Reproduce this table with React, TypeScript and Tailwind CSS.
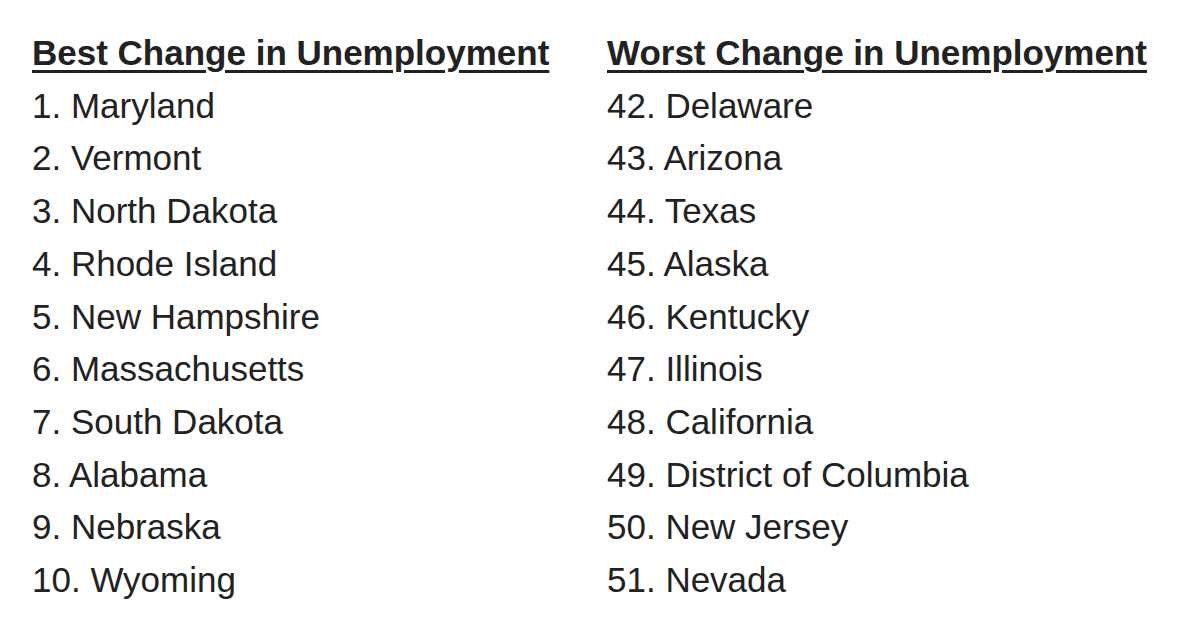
const best = [
  '1. Maryland',
  '2. Vermont',
  '3. North Dakota',
  '4. Rhode Island',
  '5. New Hampshire',
  '6. Massachusetts',
  '7. South Dakota',
  '8. Alabama',
  '9. Nebraska',
  '10. Wyoming',
]

const worst = [
  '42. Delaware',
  '43. Arizona',
  '44. Texas',
  '45. Alaska',
  '46. Kentucky',
  '47. Illinois',
  '48. California',
  '49. District of Columbia',
  '50. New Jersey',
  '51. Nevada',
]

const Column = ({ title, items }: { title: string; items: string[] }) => (
  <div className="flex flex-col">
    <h2 className="font-bold underline decoration-[3px] underline-offset-[5px]">{title}</h2>
    <ul>
      {items.map((item) => (
        <li key={item}>{item}</li>
      ))}
    </ul>
  </div>
)

export default function App() {
  return (
    <div className="min-h-[626px] w-[1182px] bg-white text-[#222222] text-[35px] leading-[52.7px] font-['Liberation_Sans',Arial,sans-serif] pt-[27px] pl-[32px]">
      <div className="grid grid-cols-[575px_1fr]">
        <Column title="Best Change in Unemployment" items={best} />
        <Column title="Worst Change in Unemployment" items={worst} />
      </div>
    </div>
  )
}
